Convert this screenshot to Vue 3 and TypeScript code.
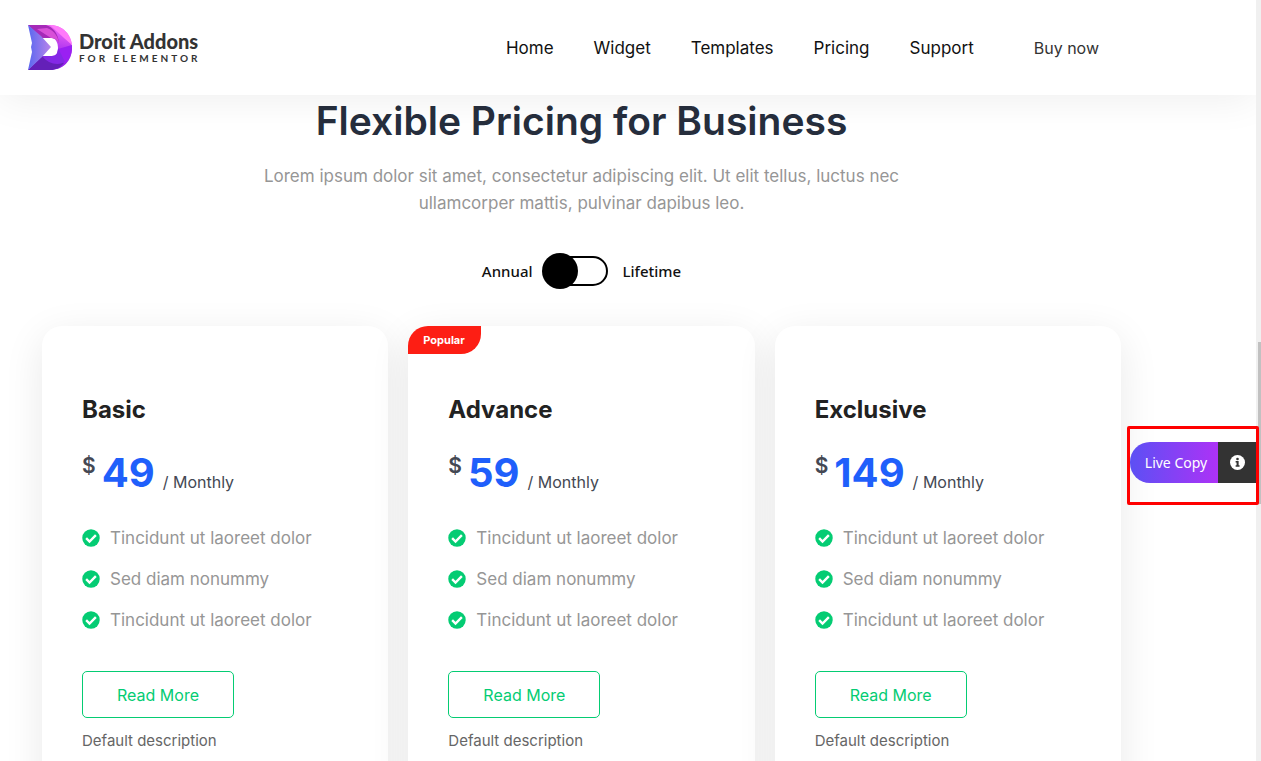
<script setup lang="ts">
import { ref } from 'vue'

interface Plan {
  name: string
  price: number
  popular: boolean
}

const links: string[] = ['Home', 'Widget', 'Templates', 'Pricing', 'Support']
const features: string[] = ['Tincidunt ut laoreet dolor', 'Sed diam nonummy', 'Tincidunt ut laoreet dolor']
const plans: Plan[] = [
  { name: 'Basic', price: 49, popular: false },
  { name: 'Advance', price: 59, popular: true },
  { name: 'Exclusive', price: 149, popular: false },
]
const lifetime = ref(false)
</script>

<template>
  <div class="page">
    <header class="header">
      <a href="#" class="logo">
        <svg class="logo-mark" viewBox="0 0 44 46" aria-hidden="true">
          <defs>
            <linearGradient id="ring" x1="0.7" y1="0" x2="0.5" y2="1">
              <stop offset="0" stop-color="#f56cf5" />
              <stop offset="0.45" stop-color="#b93cf0" />
              <stop offset="1" stop-color="#7a1fd6" />
            </linearGradient>
            <linearGradient id="fold" x1="0" y1="0" x2="1" y2="0">
              <stop offset="0" stop-color="#5a68f0" />
              <stop offset="1" stop-color="#b884ea" />
            </linearGradient>
          </defs>
          <path d="M0 0H22C35 0 44 10 44 23S35 45 22 45H0L14 31H24C28 31 30 28 30 23S28 13 23 13H13Z" fill="url(#ring)" />
          <path d="M0 0H18C25 2 30 8 31 18C29 14 26 13 23 13L13 13Z" fill="#a52ab8" />
          <path d="M9 4L19 3C27 6 30 12 31 18C29 14 26 13 23 13Z" fill="#d850d8" />
          <path d="M22 0C34 0 43 9 44 20L36 13Z" fill="#ff7bfa" />
          <path d="M30 24L44 20C45 31 38 41 28 44Z" fill="#9a20f2" />
          <path d="M0 45L14 31H25L36 38C32 43 27 45 22 45Z" fill="#6420b8" />
          <path d="M14 31H24C28 31 30 28 30 23L37 37C30 41 20 39 14 31Z" fill="#8428e6" />
          <path d="M0 0L13 11L23 22L14 32L0 45L4 27L3 22L4 18Z" fill="url(#fold)" />
        </svg>
        <span class="logo-text">
          <span class="logo-name">Droit Addons</span>
          <span class="logo-sub">FOR ELEMENTOR</span>
        </span>
      </a>
      <nav class="nav" aria-label="Main">
        <a v-for="link in links" :key="link" href="#">{{ link }}</a>
        <a href="#" class="buy">Buy now</a>
      </nav>
    </header>

    <main class="content">
      <h1>Flexible Pricing for Business</h1>
      <p class="intro">
        Lorem ipsum dolor sit amet, consectetur adipiscing elit. Ut elit tellus, luctus nec<br />
        ullamcorper mattis, pulvinar dapibus leo.
      </p>
      <label class="switch">
        <span>Annual</span>
        <input v-model="lifetime" type="checkbox" role="switch" />
        <span class="after">Lifetime</span>
      </label>

      <div class="plans">
        <section v-for="plan in plans" :key="plan.name" class="plan">
          <span v-if="plan.popular" class="badge">Popular</span>
          <h2>{{ plan.name }}</h2>
          <div class="price">
            <span class="currency">$</span>
            <strong>{{ plan.price }}</strong>
            <span class="period">/ Monthly</span>
          </div>
          <ul>
            <li v-for="(feature, i) in features" :key="i">
              <svg viewBox="0 0 512 512" aria-hidden="true">
                <circle cx="256" cy="256" r="248" fill="#04cc73" />
                <path d="M118 260L214 356L394 176" fill="none" stroke="#fff" stroke-width="68" />
              </svg>
              <span>{{ feature }}</span>
            </li>
          </ul>
          <button type="button" class="more">Read More</button>
          <p class="note">Default description</p>
        </section>
      </div>
    </main>

    <div class="live">
      <button type="button" class="copy">Live Copy</button>
      <button type="button" class="info" aria-label="Information">
        <svg viewBox="0 0 16 16" aria-hidden="true">
          <circle cx="8" cy="8" r="8" fill="#fff" />
          <circle cx="8" cy="4.3" r="1.4" fill="#333" />
          <path d="M6 6.5H9.2V11H10.2V12.4H6V11H7V8H6Z" fill="#333" />
        </svg>
      </button>
    </div>
    <div class="rail"><div class="thumb"></div></div>
  </div>
</template>

<style>
body {
  margin: 0;
  background: #fff;
}
</style>

<style scoped>
* {
  box-sizing: border-box;
}
.page {
  position: relative;
  height: 100vh;
  overflow: hidden;
  background: #fff;
  font-family: Inter, 'Liberation Sans', sans-serif;
}
a {
  color: inherit;
  text-decoration: none;
}
button {
  font-family: inherit;
  cursor: pointer;
}
.header {
  position: relative;
  z-index: 1;
  display: flex;
  align-items: center;
  justify-content: space-between;
  height: 95px;
  margin-right: 5px;
  padding: 0 157px 0 28px;
  background: #fff;
  box-shadow: 0 4px 40px rgba(0, 0, 0, 0.07);
}
.logo {
  display: flex;
  align-items: center;
  gap: 7px;
}
.logo-mark {
  width: 44px;
  height: 46px;
}
.logo-text {
  display: flex;
  flex-direction: column;
  color: #333;
  font-family: Lato, sans-serif;
  font-weight: 700;
  white-space: nowrap;
}
.logo-name {
  font-size: 20px;
  font-weight: 900;
  line-height: 20px;
}
.logo-sub {
  font-size: 10px;
  line-height: 14px;
  letter-spacing: 3px;
}
.nav {
  display: flex;
  align-items: center;
  gap: 40px;
  color: #111;
  font-size: 17px;
  white-space: nowrap;
}
.buy {
  margin-left: 20px;
  color: #333;
  font-size: 16px;
}
.content {
  display: flex;
  flex-direction: column;
  padding: 0 140px 0 42px;
  text-align: center;
}
h1 {
  margin: 0;
  color: #262e3d;
  font-size: 39px;
  font-weight: 600;
  line-height: 52px;
}
.intro {
  margin: 16px 0 36px;
  color: #969696;
  font-size: 17px;
  line-height: 27px;
}
.switch {
  display: flex;
  align-items: center;
  align-self: center;
  gap: 9px;
  height: 36px;
  color: #111;
  font-family: 'Noto Sans', sans-serif;
  font-size: 15px;
  font-weight: 500;
}
.switch input {
  position: relative;
  appearance: none;
  width: 64px;
  height: 30px;
  margin: 0 0 0 2px;
  border: 2px solid #000;
  border-radius: 15px;
}
.switch input::before {
  content: '';
  position: absolute;
  top: -5px;
  left: -4px;
  width: 36px;
  height: 36px;
  border-radius: 50%;
  background: #000;
}
.switch input:checked::before {
  left: 28px;
}
.after {
  padding-left: 6px;
}
.plans {
  display: grid;
  grid-template-columns: repeat(3, 1fr);
  gap: 20px;
  margin-top: 37px;
  text-align: left;
}
.plan {
  position: relative;
  padding: 66px 40px 60px;
  border-radius: 20px;
  background: #fff;
  box-shadow: 0 10px 40px rgba(0, 0, 0, 0.09);
}
.badge {
  position: absolute;
  top: 0;
  left: 0;
  padding: 0 16px 0 15px;
  border-radius: 20px 0;
  background: #fd1e14;
  color: #fff;
  font-size: 11px;
  font-weight: 700;
  line-height: 28px;
}
h2 {
  margin: 0;
  color: #222;
  font-size: 24px;
  font-weight: 700;
  line-height: 36px;
}
.price {
  display: flex;
  height: 50px;
  margin-top: 20px;
  line-height: 50px;
  white-space: nowrap;
}
.currency {
  margin-right: 6px;
  color: #444853;
  font-size: 21px;
  font-weight: 600;
  line-height: 36px;
}
.price strong {
  color: #1f5ffb;
  font-size: 40px;
  font-weight: 700;
}
.period {
  margin-left: 8px;
  color: #444853;
  font-size: 16px;
  line-height: 68px;
}
ul {
  display: flex;
  flex-direction: column;
  gap: 17px;
  margin: 28px 0 39px;
  padding: 0;
  list-style: none;
}
li {
  display: flex;
  align-items: center;
  gap: 10px;
  color: #969696;
  font-size: 17px;
  line-height: 24px;
}
li svg {
  width: 18px;
  height: 18px;
}
.more {
  width: 152px;
  height: 47px;
  border: 1px solid #04cc73;
  border-radius: 5px;
  background: #fff;
  color: #04cc73;
  font-size: 16px;
}
.note {
  margin: 11px 0 0;
  color: #666;
  font-size: 15px;
  line-height: 24px;
}
.live {
  position: absolute;
  z-index: 3;
  top: 426px;
  right: 2px;
  display: flex;
  height: 79px;
  padding-top: 13px;
  border: 3px solid #f00;
  border-radius: 2px;
}
.copy {
  width: 88px;
  height: 41px;
  padding: 0 0 0 4px;
  border: 0;
  border-radius: 20px 0 0 20px;
  background: linear-gradient(90deg, #5c50f4, #ad32f6);
  color: #fff;
  font-family: 'Noto Sans', sans-serif;
  font-size: 14px;
}
.info {
  display: flex;
  align-items: center;
  justify-content: center;
  width: 38px;
  height: 41px;
  padding: 0;
  border: 0;
  background: #333;
}
.info svg {
  width: 15px;
  height: 15px;
}
.rail {
  position: absolute;
  z-index: 2;
  top: 0;
  right: 0;
  bottom: 0;
  width: 5px;
  padding: 342px 0 0 2px;
  background: #f0f0f0;
}
.thumb {
  height: 162px;
  background: #c1c1c1;
}
</style>
